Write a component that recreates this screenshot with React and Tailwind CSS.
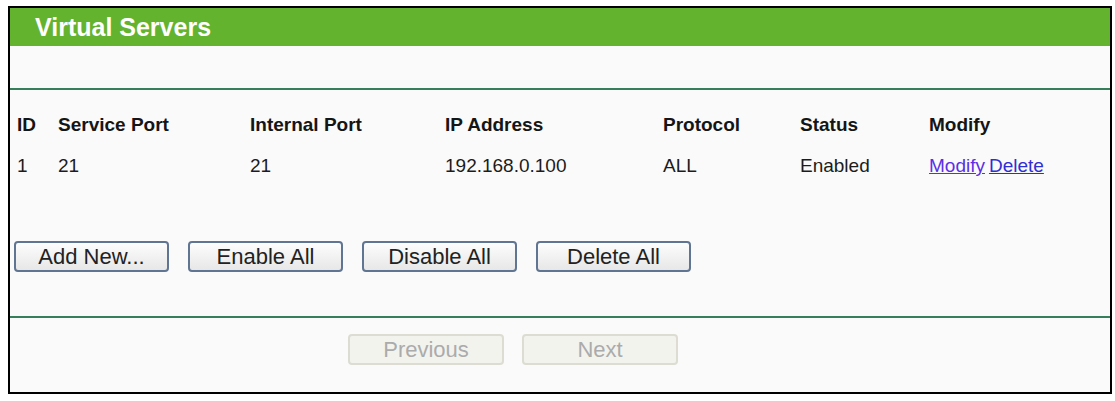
export default function App() {
  const cols =
    "grid grid-cols-[41px_192px_195px_218px_137px_129px_1fr] pl-[7px] h-[22px] leading-[22px] text-[19px]";
  const actions = ["Add New...", "Enable All", "Disable All", "Delete All"];

  return (
    <div className="bg-white min-h-[401px] pt-[6px] pl-[8px] font-['Liberation_Sans',Arial,sans-serif]">
      <div className="w-[1104px] h-[388px] border-2 border-black bg-[#fafafa] flex flex-col">
        <div className="h-[38px] bg-[#64b32e] pl-[25px] text-white text-[25px] font-bold leading-[38px]">
          Virtual Servers
        </div>
        <div className="h-[42px]"></div>
        <div className="h-[2px] bg-[#35805a]"></div>

        <div className="pt-[24px] text-[#1c1c1c]">
          <div className={`${cols} font-bold text-[#151515]`}>
            <div>ID</div>
            <div>Service Port</div>
            <div>Internal Port</div>
            <div>IP Address</div>
            <div>Protocol</div>
            <div>Status</div>
            <div>Modify</div>
          </div>
          <div className={`${cols} mt-[19px]`}>
            <div>1</div>
            <div>21</div>
            <div>21</div>
            <div>192.168.0.100</div>
            <div>ALL</div>
            <div>Enabled</div>
            <div className="flex gap-[4px]">
              <a href="#" className="underline text-[#5a2fe6]">
                Modify
              </a>
              <a href="#" className="underline text-[#2e2ed6]">
                Delete
              </a>
            </div>
          </div>
        </div>

        <div className="flex gap-[19px] pl-[4px] mt-[64px]">
          {actions.map((label) => (
            <button
              key={label}
              className="w-[155px] h-[31px] rounded-[4px] border-2 border-[#5f7592] bg-gradient-to-b from-[#fdfdfd] to-[#e7e7e7] text-[22px] leading-none text-[#222]"
            >
              {label}
            </button>
          ))}
        </div>

        <div className="h-[44px]"></div>
        <div className="h-[2px] bg-[#35805a]"></div>

        <div className="flex gap-[18px] pl-[338px] mt-[16px]">
          <button
            disabled
            className="w-[156px] h-[31px] rounded-[4px] border-2 border-[#dcdcd2] bg-[#f3f3ee] text-[22px] leading-none text-[#ababab]"
          >
            Previous
          </button>
          <button
            disabled
            className="w-[156px] h-[31px] rounded-[4px] border-2 border-[#dcdcd2] bg-[#f3f3ee] text-[22px] leading-none text-[#ababab]"
          >
            Next
          </button>
        </div>
      </div>
    </div>
  );
}
